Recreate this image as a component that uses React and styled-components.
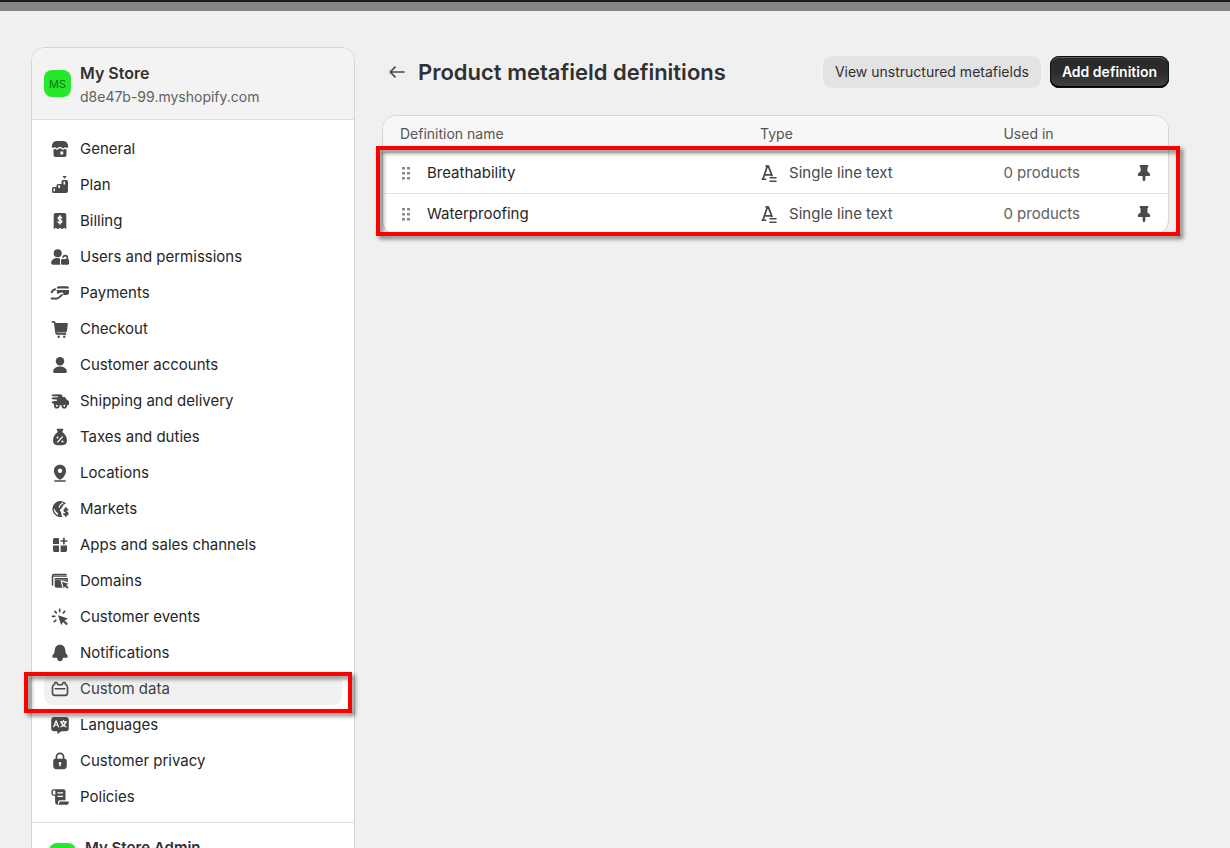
import React from "react";
import styled, { createGlobalStyle, css } from "styled-components";

const GlobalStyle = createGlobalStyle`
  *, *::before, *::after { box-sizing: border-box; }
  body {
    margin: 0;
    background: #f0f0f0;
    color: #303030;
    font-family: Inter, "Liberation Sans", sans-serif;
    font-size: 15px;
    line-height: 20px;
  }
  h1, p, ul { margin: 0; padding: 0; }
  button { font: inherit; color: inherit; border: 0; cursor: pointer; }
`;

const Page = styled.div`
  height: 100vh;
  overflow: hidden;
`;

const Backdrop = styled.div`
  height: 11px;
  background: #858585;
  border-top: 2px solid #1a1a1a;
`;

const Layout = styled.div`
  display: flex;
  align-items: flex-start;
  gap: 27px;
  padding: 36px 61px 0 31px;
`;

const Sidebar = styled.aside`
  flex: 0 0 324px;
  background: #fff;
  border: 1px solid #d4d4d4;
  border-radius: 14px;
`;

const StoreHeader = styled.div`
  display: flex;
  align-items: center;
  gap: 9px;
  height: 72px;
  padding: 0 12px;
  background: #f3f3f3;
  border-bottom: 1px solid #dedede;
  border-radius: 13px 13px 0 0;
`;

const StoreText = styled.div`
  padding-top: 3px;
`;

const Avatar = styled.span`
  display: grid;
  place-items: center;
  flex: none;
  width: 27px;
  height: 27px;
  border-radius: 8px;
  background: #25e82b;
  color: #136b18;
  font-size: 11px;
`;

const StoreName = styled.p`
  font-size: ${(p) => (p.$large ? "16px" : "15px")};
  font-weight: 600;
  line-height: 24px;
`;

const StoreDomain = styled.p`
  color: #616161;
  font-size: 14px;
  line-height: 24px;
`;

const NavList = styled.ul`
  display: flex;
  flex-direction: column;
  gap: 4px;
  padding: 13px 12px 9px;
  list-style: none;
`;

const NavItem = styled.li`
  position: relative;
`;

const NavLink = styled.a`
  display: flex;
  align-items: center;
  gap: 9px;
  height: 32px;
  padding: 0 5px;
  border-radius: 9px;
  color: #262626;
  text-decoration: none;
  ${(p) => p.$active && css`
    background: #f1f1f1;
    color: #404040;
  `}
`;

const Account = styled.div`
  display: flex;
  align-items: center;
  gap: 9px;
  min-height: 68px;
  padding: 0 17px;
  border-top: 1px solid #dedede;
`;

const AccountText = styled.div`
  min-height: 41px;
`;

const Highlight = styled.span`
  position: absolute;
  inset: ${(p) => p.$inset};
  border: 4px solid #fe0000;
  filter: drop-shadow(3px 3px 2px rgba(0, 0, 0, 0.5));
  pointer-events: none;
`;

const Main = styled.main`
  flex: 1;
  min-width: 0;
`;

const TitleBar = styled.header`
  display: flex;
  align-items: center;
  gap: 9px;
  padding: 9px 0 27px;
`;

const BackButton = styled.button`
  display: grid;
  place-items: center;
  width: 27px;
  height: 32px;
  padding: 0;
  background: none;
`;

const Title = styled.h1`
  flex: 1;
  font-size: 22px;
  font-weight: 600;
  line-height: 32px;
`;

const Button = styled.button`
  height: 32px;
  padding: 0 12px;
  border-radius: 9px;
  background: #e3e3e3;
  font-size: 14px;
  white-space: nowrap;
  ${(p) => p.$primary && css`
    background: linear-gradient(#2b2b2b 50%, #454545);
    color: #fff;
    font-weight: 600;
    box-shadow: inset 0 0 0 1px #111, inset 0 2px 0 #5c5c5c, inset 0 -2px 0 #000;
  `}
`;

const TableCard = styled.section`
  position: relative;
  background: #fff;
  border: 1px solid #d4d4d4;
  border-radius: 14px;
`;

const Table = styled.table`
  width: 100%;
  table-layout: fixed;
  border-collapse: separate;
  border-spacing: 0;
`;

const HeadCell = styled.th`
  width: ${(p) => p.$width || "auto"};
  height: 36px;
  padding: 0 16px;
  background: #f7f7f7;
  color: #555;
  font-size: 14px;
  font-weight: 400;
  text-align: left;
  &:first-child { padding-left: 17px; border-top-left-radius: 13px; }
  &:last-child { border-top-right-radius: 13px; }
`;

const Cell = styled.td`
  height: 41px;
  padding: 0 16px;
  border-top: 1px solid #e3e3e3;
  color: ${(p) => (p.$subdued ? "#616161" : "#4a4a4a")};
  &:first-child { padding-left: 17px; }
`;

const CellContent = styled.div`
  display: flex;
  align-items: center;
  gap: ${(p) => p.$gap};
  color: ${(p) => (p.$strong ? "#262626" : "inherit")};
`;

const PinButton = styled.button`
  display: grid;
  place-items: center;
  padding: 0;
  background: none;
`;

const Svg = styled.svg`
  display: block;
  flex: none;
  fill: #4a4a4a;
`;

const ink = "#4a4a4a";
const stroke = (color, width) => ({
  fill: "none",
  stroke: color,
  strokeWidth: width,
  strokeLinecap: "round",
  strokeLinejoin: "round",
});
const dark = stroke(ink, 1.7);
const dollar = "M3.4 1.3C3 .6 2.400.4 1.600.4.6.4 0 .9 0 1.700c0 2 3.600 1.200 3.600 3.200C3.600 5.800 2.800 6.300 1.700 6.300.8 6.300.1 5.900-.2 5.200M1.700-.8v8.300";

const icons = {
  store: (
    <>
      <path d="M7.800 3h6.400c2.200 0 3.800 1.100 4.500 3.200l.4 1.200c.3 1.300-.3 2.400-1.500 2.600l-1.200-.9-2.200 1.300-2.100-1.300h-2.200L7.800 10.400 5.600 9.100l-1.200.9C3.200 9.800 2.600 8.700 2.900 7.400l.4-1.200C4 4.100 5.600 3 7.800 3z" />
      <path fillRule="evenodd" d="M5 11.300l1-.6 1.900 1.200 2.200-1.300h1.800l2.200 1.300 1.900-1.200 1.500.8V17a2 2 0 0 1-2 2H6.500a2 2 0 0 1-2-2v-5.500zm6.400 2.200v3h2.800v-3z" />
    </>
  ),
  plan: (
    <path fillRule="evenodd" d="M4.500 13H7.500v-1.500A1.500 1.500 0 0 1 9 10h3.500V7.500A1.500 1.500 0 0 1 14 6h3.500A1.500 1.500 0 0 1 19 7.500V17a2 2 0 0 1-2 2H4.500A1.500 1.500 0 0 1 3 17.500v-3A1.500 1.500 0 0 1 4.500 13zm0 1.500v2.800H6v-2.800zm4.800-3.200v2.800H11v-2.800zm5.200-3.800v3h1.600v-3zM13.400 2h4.400l-2.200 2.700z" />
  ),
  billing: (
    <>
      <path d="M6.700 3h8.600a2 2 0 0 1 2 2v14.300l-2.100-1.600-2.100 1.600-2.100-1.600-2.100 1.600-2.100-1.600-2.100 1.600V5a2 2 0 0 1 2-2z" />
      <path d={dollar} transform="translate(9.200 6.600)" {...stroke("#fff", 1.500)} />
    </>
  ),
  users: (
    <>
      <circle cx="8.700" cy="7.200" r="4" />
      <path d="M2.100 16.800c.3-3 2.800-4.900 6.200-4.900 1.200 0 2 .2 2.700.6v6.300H4c-1.200 0-2-.8-1.900-2z" />
      <rect x="12" y="13" width="8" height="5.800" rx="1.300" />
      <path d="M18.300 13.500v-1.800c0-1.300-.8-2.100-2.100-2.100s-2 .8-2.100 1.600" {...dark} />
    </>
  ),
  payments: (
    <>
      <path d="M9.800 4.300H18c1.200 0 2 .7 2 2v.3H7.700c.2-1.400.9-2.300 2.100-2.300zM7.500 7.900H20v2.700c0 1.500-.8 2.400-2.300 2.400h-3.600c1-1.900-.3-3-2.100-2.400l-3 1.100c-1.300-.1-1.600-1.200-.8-1.900z" />
      <path d="M2.700 10.200c1-1.900 2.100-2.700 3.400-2.900M2.700 16.500c1.500-.2 3.600.4 5.200.1 2.200-.4 3.200-2.500 5-3.500" {...stroke(ink, 2)} />
    </>
  ),
  cart: (
    <>
      <path d="M5.800 5H18c.6 0 .9.400.8 1l-.8 7c-.1.9-.8 1.500-1.700 1.500H7.500z" />
      <path d="M3.500 3.900h1.300c.6 0 .9.300 1 .9l1.300 10c.1.700.5 1.100 1.100 1.100H16.500" {...dark} />
      <circle cx="9.700" cy="18.800" r="1.200" />
      <circle cx="15.200" cy="18.800" r="1.200" />
    </>
  ),
  person: (
    <>
      <circle cx="11" cy="7.200" r="4.200" />
      <path d="M11 12.600c3.700 0 6.500 1.800 6.900 4.700.1 1-.6 1.700-1.600 1.700H5.700c-1 0-1.700-.7-1.600-1.700.4-2.900 3.200-4.700 6.900-4.700z" />
    </>
  ),
  truck: (
    <>
      <path d="M6.500 4.500H12c1 0 1.500.6 1.500 1.500v1h1.800c.7 0 1.200.3 1.500.9l.9 1.800 1.400.7c.6.300.9.800.9 1.500v1.800c0 1-.6 1.600-1.500 1.600H6c-1 0-1.500-.6-1.500-1.500V11h3V9.500h-3V7h-1" />
      <path d="M3.500 5.300H10M3.500 8.300h5.200M3.500 12.300H7" {...dark} />
      <path d="M4 6.800h4.500M4 10.200h3.500" {...stroke("#fff", 1)} />
      <circle cx="7.800" cy="15.700" r="1.900" fill="#fff" stroke={ink} strokeWidth="1.800" />
      <circle cx="15.300" cy="15.700" r="1.900" fill="#fff" stroke={ink} strokeWidth="1.800" />
    </>
  ),
  taxes: (
    <>
      <path d="M7.600 3.200c0-.3.200-.5.500-.5h5.800c.3 0 .5.200.5.500L13.300 5.900c2.900 1.900 4.700 5.100 4.700 8.700 0 2.900-1.700 4.700-4.400 4.700H8.400C5.700 19.300 4 17.500 4 14.600c0-3.600 1.800-6.800 4.700-8.700z" />
      <path d="M8.800 15.900l4.600-5" {...stroke("#fff", 1.400)} />
      <circle cx="8.500" cy="11.400" r="1" fill="#fff" />
      <circle cx="13.500" cy="15.500" r="1" fill="#fff" />
    </>
  ),
  location: (
    <>
      <path fillRule="evenodd" d="M11 2.700c3.500 0 6.100 2.600 6.100 6 0 3.500-2.300 6.600-5 8.600-.7.500-1.500.5-2.200 0-2.700-2-5-5.100-5-8.600 0-3.400 2.600-6 6.100-6zm0 3.900a2.200 2.200 0 1 0 0 4.400 2.200 2.200 0 0 0 0-4.400z" />
      <path d="M5.900 18.900h10.200" {...stroke(ink, 1.500)} />
    </>
  ),
  markets: (
    <>
      <path fillRule="evenodd" d="M11 3c2.500 0 4.500 1 6 2.700l-2.200.7-1.800 3c-.6 1.200-1.800 1.600-2 2.600-.2 1.200 1.300 1.600 1.300 3.200 0 1.500.2 2.500 1.200 3.500A8 8 0 1 1 11 3zM4.700 10.600c0 3 1.600 5.600 4.300 6.600.4-1.500-.4-2.400-1.500-3.200-1.300-.9-1.300-2.400-2.800-3.400z" />
      <path d="M10.200 9.200l1.200-2.500 2.400-1.700" {...stroke("#fff", 1.100)} />
      <path d={dollar} transform="translate(15.200 10.600)" {...stroke(ink, 1.700)} />
    </>
  ),
  apps: (
    <>
      <path d="M5.800 4h3.400c.5 0 .8.300.8.800V10H4V5.800C4 4.700 4.700 4 5.800 4zM4 11.600h6V18H5.800C4.700 18 4 17.300 4 16.200zM11.600 11.600H18v4.600c0 1.100-.7 1.800-1.800 1.800h-4.600z" />
      <path d="M14.900 4.300v5.400M12.200 7h5.400" {...dark} />
    </>
  ),
  domains: (
    <>
      <path d="M3.500 15V6.300c0-1.100.6-1.700 1.700-1.700H17" {...stroke(ink, 1.500)} />
      <path d="M3.500 6.200H17.500" {...stroke(ink, 1.200)} />
      <path d="M5.700 8h13.200v4l-6.300-1.700c-.7-.2-1.200.3-1 1l1.900 6.500H7.700c-1.300 0-2-.7-2-2z" />
      <path d="M6.500 9.700h11.600" {...stroke("#a5a5a5", 0.700)} />
      <path d="M13 11.700l6.600 2.100-2.300 1.300 2.300 2.500-1.300 1.200-2.400-2.300-1.100 2z" />
    </>
  ),
  events: (
    <>
      <path d="M9 9.200l10 3.400-3.500 1.900 3.400 3.300-1.500 1.500-3.400-3.400-1.800 3.400z" />
      <path d="M10.700 3.300v2.200M6 5.400l1.300 1.500M3.500 10.300h2.300M5.200 15.700l1.700-1.500M15.700 5.300l-1.400 1.500" {...dark} />
    </>
  ),
  bell: (
    <path d="M11 2.700c3 0 5 2.200 5.200 5 .2 2.600.6 3.700 2 5.300.6.700.7 1.300.4 1.900-.3.600-.8.900-1.500.9H14c-.2 2.500-1.400 3.500-3 3.500s-2.800-1-3-3.500H4.900c-.7 0-1.200-.3-1.500-.9-.3-.6-.2-1.200.4-1.900 1.400-1.600 1.800-2.700 2-5.300.2-2.800 2.200-5 5.200-5z" />
  ),
  data: (
    <path d="M3.500 9.500c0-1 .2-1.500.9-2.200l1.300-1.300V5.200c0-.4.300-.7.700-.7h.9c.3 0 .5.100.7.400l.9 1.800h4.200l.9-1.800c.2-.3.400-.4.700-.4h.9c.4 0 .7.300.7.700v.8l1.300 1.300c.7.700.9 1.200.9 2.200v5.500c0 1.500-.9 2.400-2.400 2.400H5.900c-1.500 0-2.400-.9-2.400-2.400zM6.200 10.800h9.600" {...stroke(ink, 1.600)} />
  ),
  languages: (
    <>
      <path d="M5 3h12c1.700 0 2.800 1.100 2.800 2.800v8.700c0 1.700-1.100 2.800-2.800 2.800h-4.500L9.200 19.500c-.5.300-.9.100-.9-.4v-1.800H5c-1.700 0-2.800-1.100-2.800-2.800V5.800C2.200 4.100 3.300 3 5 3z" />
      <path d="M4.700 12.800L7.100 6.800l2.400 6M5.600 11h3M11.500 7.900h6M14.500 6.500v1.400M12.500 8.500c.5 1.800 2.200 3.400 4.500 4.300M16.500 8.500c-.5 1.800-2.200 3.400-4.500 4.300" {...stroke("#fff", 1.200)} />
    </>
  ),
  lock: (
    <>
      <path fillRule="evenodd" d="M6.500 8.800h9c1.500 0 2.300.8 2.300 2.300v5c0 1.900-1.200 3.100-3.100 3.100H7.300c-1.900 0-3.100-1.200-3.100-3.100v-5c0-1.500.8-2.300 2.300-2.300zM11 12a1.400 1.400 0 0 0-.7 2.600v1.600h1.400v-1.600A1.400 1.400 0 0 0 11 12z" />
      <path d="M7.400 9.200V7a3.600 3.600 0 0 1 7.200 0v2.200" {...dark} />
    </>
  ),
  policies: (
    <>
      <path d="M4.500 3.300h10c1.200 0 2 .8 2 2v8.900H11c-1.200 0-1.900.7-1.900 1.900v2.600c-1.900 0-3-1.100-3-3V9.800H4.500c-1.200 0-2-.8-2-2V5.300c0-1.200.8-2 2-2z" />
      <path d="M4.500 5.100v2.800h1.300V5.100zM8.900 6.900h4.700M8.900 10.300h4.700" {...stroke("#fff", 1.200)} />
      <path d="M10.500 15.600h9.200v.8c0 1.500-.8 2.300-2.200 2.300H9.100c.9-.6 1.400-1.600 1.400-3.100z" />
    </>
  ),
  back: <path d="M19 11H5.500M10 6.200L5.200 11 10 15.800" {...stroke(ink, 1.700)} />,
  text: (
    <>
      <path d="M3 17L7.300 4.200h1L12 13.500M4.500 12.800h6" {...stroke(ink, 1.800)} />
      <path d="M2 17.200h3.800M5.800 4h2.500" {...stroke(ink, 1.400)} />
      <path d="M10 15.800h6M10 19.300h6" {...stroke(ink, 1.500)} />
    </>
  ),
  pin: (
    <path d="M7.400 3h7.200c.6 0 .9.400.8.900-.2.900-1 1.300-1 2.100v3.200c0 .9 2.800 1.300 2.800 3.900 0 .6-.3.900-.9.900h-3.900v2.700c0 1-.5 2.100-1.400 2.900-.9-.8-1.400-1.900-1.400-2.900V14H5.700c-.6 0-.9-.3-.9-.9 0-2.600 2.800-3 2.800-3.900V6c0-.8-.8-1.200-1-2.100-.1-.5.2-.9.800-.9z" />
  ),
  drag: (
    <path fill="#8a8a8a" d="M2 5h3v2.500H2zM7 5h3v2.500H7zM2 10h3v2.500H2zM7 10h3v2.500H7zM2 15h3v2.500H2zM7 15h3v2.500H7z" />
  ),
};

function Icon({ name, width = 22 }) {
  return (
    <Svg width={width} height="22" viewBox={`0 0 ${width} 22`} aria-hidden="true">
      {icons[name]}
    </Svg>
  );
}

const navigation = [
  ["store", "General"],
  ["plan", "Plan"],
  ["billing", "Billing"],
  ["users", "Users and permissions"],
  ["payments", "Payments"],
  ["cart", "Checkout"],
  ["person", "Customer accounts"],
  ["truck", "Shipping and delivery"],
  ["taxes", "Taxes and duties"],
  ["location", "Locations"],
  ["markets", "Markets"],
  ["apps", "Apps and sales channels"],
  ["domains", "Domains"],
  ["events", "Customer events"],
  ["bell", "Notifications"],
  ["data", "Custom data"],
  ["languages", "Languages"],
  ["lock", "Customer privacy"],
  ["policies", "Policies"],
];

const definitions = ["Breathability", "Waterproofing"];

export default function App() {
  return (
    <Page>
      <GlobalStyle />
      <Backdrop />
      <Layout>
        <Sidebar>
          <StoreHeader>
            <Avatar>MS</Avatar>
            <StoreText>
              <StoreName $large>My Store</StoreName>
              <StoreDomain>d8e47b-99.myshopify.com</StoreDomain>
            </StoreText>
          </StoreHeader>
          <nav>
            <NavList>
              {navigation.map(([icon, label]) => {
                const active = label === "Custom data";
                return (
                  <NavItem key={label}>
                    <NavLink href="#" $active={active}>
                      <Icon name={icon} />
                      {label}
                    </NavLink>
                    {active && <Highlight $inset="-1px -10px -8px -20px" />}
                  </NavItem>
                );
              })}
            </NavList>
          </nav>
          <Account>
            <Avatar />
            <AccountText>
              <StoreName>My Store Admin</StoreName>
            </AccountText>
          </Account>
        </Sidebar>
        <Main>
          <TitleBar>
            <BackButton type="button" aria-label="Back">
              <Icon name="back" />
            </BackButton>
            <Title>Product metafield definitions</Title>
            <Button type="button">View unstructured metafields</Button>
            <Button type="button" $primary>Add definition</Button>
          </TitleBar>
          <TableCard>
            <Table>
              <thead>
                <tr>
                  <HeadCell $width="46%">Definition name</HeadCell>
                  <HeadCell $width="31%">Type</HeadCell>
                  <HeadCell>Used in</HeadCell>
                  <HeadCell $width="51px" aria-label="Pinned" />
                </tr>
              </thead>
              <tbody>
                {definitions.map((name) => (
                  <tr key={name}>
                    <Cell>
                      <CellContent $strong $gap="15px">
                        <Icon name="drag" width={12} />
                        {name}
                      </CellContent>
                    </Cell>
                    <Cell>
                      <CellContent $gap="11px">
                        <Icon name="text" width={18} />
                        Single line text
                      </CellContent>
                    </Cell>
                    <Cell $subdued>0 products</Cell>
                    <Cell>
                      <PinButton type="button" aria-label={`Unpin ${name}`}>
                        <Icon name="pin" />
                      </PinButton>
                    </Cell>
                  </tr>
                ))}
              </tbody>
            </Table>
            <Highlight $inset="30px -12px -2px -7px" />
          </TableCard>
        </Main>
      </Layout>
    </Page>
  );
}
